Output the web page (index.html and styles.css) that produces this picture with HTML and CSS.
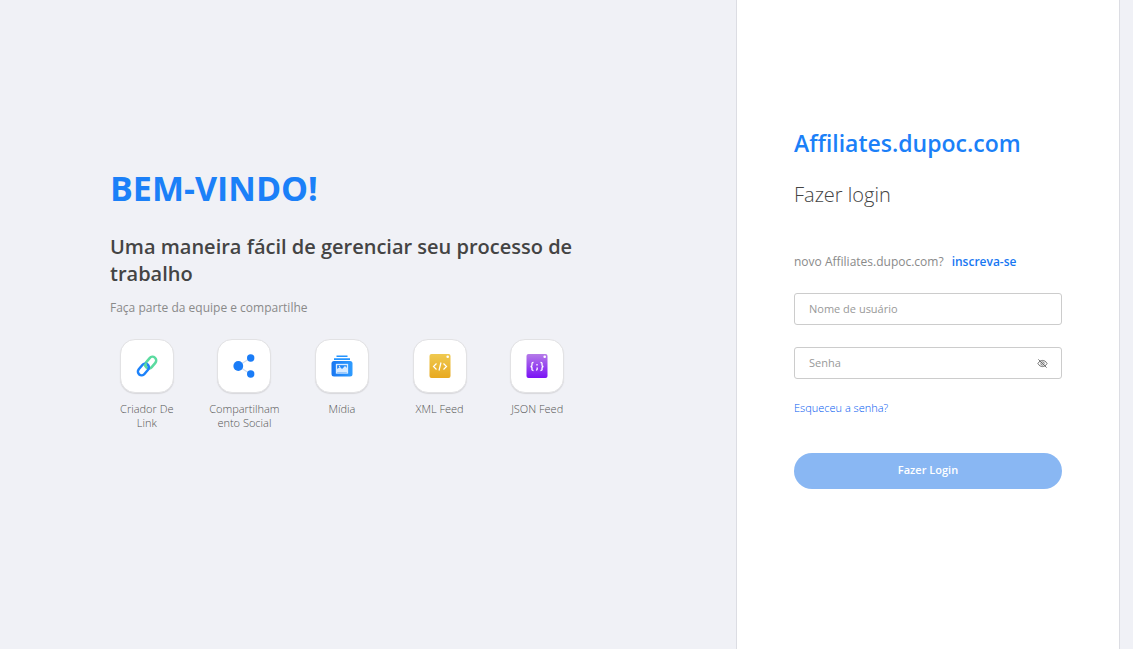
FILE: index.html
```html
<!DOCTYPE html>
<html lang="pt">
<head>
<meta charset="utf-8">
<meta name="viewport" content="width=device-width, initial-scale=1">
<title>Fazer login</title>
<link rel="stylesheet" href="styles.css">
</head>
<body>
<main class="page">
  <section class="welcome">
    <div class="intro">
      <h1 class="welcome-title">BEM-VINDO!</h1>
      <h2 class="welcome-subtitle">Uma maneira fácil de gerenciar seu processo de trabalho</h2>
      <p class="welcome-text">Faça parte da equipe e compartilhe</p>
      <ul class="features">
        <li class="feature">
          <span class="tile"><svg class="icon" viewBox="0 0 24 24" aria-hidden="true">
            <defs><linearGradient id="blue" x1="0" x2="1"><stop offset="0" stop-color="#1877f2"/><stop offset="1" stop-color="#2f9cff"/></linearGradient></defs>
            <g fill="none" stroke-width="2.500"><rect x="9.2" y="4.9" width="13" height="7.4" rx="3.7" transform="rotate(-50 15.7 8.6)" stroke="#5bdba0"/><rect x="1.9" y="11.8" width="13" height="7.4" rx="3.7" transform="rotate(-50 8.4 15.500)" stroke="#1d82fa"/><path d="M9.200 12.200l2.200-2.900" stroke="#5bdba0"/></g></svg></span>
          <span class="feature-name">Criador De Link</span>
        </li>
        <li class="feature">
          <span class="tile"><svg class="icon" viewBox="0 0 24 24" aria-hidden="true"><path d="M18.500 4L6 12l12.500 8" fill="none" stroke="#cfdcf0" stroke-width="1.200"/><g fill="#1a7cf7"><circle cx="6.300" cy="12" r="4.900"/><circle cx="18.700" cy="4" r="3.700"/><circle cx="18.700" cy="20" r="3.700"/></g></svg></span>
          <span class="feature-name">Compartilhamento Social</span>
        </li>
        <li class="feature">
          <span class="tile"><svg class="icon" viewBox="0 0 24 24" aria-hidden="true"><path d="M6.500 1.500h11v1.600h-11zM4 4.200h16v1.800H4z" fill="#2494ff"/><rect x="1.500" y="7" width="21" height="15.500" rx="2.500" fill="url(#blue)"/><rect x="6.500" y="10.500" width="11" height="8.500" fill="none" stroke="#d9ebff" stroke-width="1.300"/><path d="M7 18v-3l3-2 2 2 3-3 2 2v4z" fill="#d9ebff"/><circle cx="9.500" cy="12.500" r=".7" fill="#d9ebff"/></svg></span>
          <span class="feature-name">Mídia</span>
        </li>
        <li class="feature">
          <span class="tile"><svg class="icon" viewBox="0 0 24 24" aria-hidden="true"><defs><linearGradient id="gold" x2="0" y2="1"><stop stop-color="#efc950"/><stop offset="1" stop-color="#e8a920"/></linearGradient></defs><rect x="1.500" width="21" height="24" rx="2" fill="url(#gold)"/><circle cx="19.700" cy="2.700" r="1.300" fill="#fff"/><path d="M8.500 9.500L5.500 12.500l3 3M15.500 9.500l3 3-3 3M13 8.500l-2 8" fill="none" stroke="#fff" stroke-width="1.200"/></svg></span>
          <span class="feature-name">XML Feed</span>
        </li>
        <li class="feature">
          <span class="tile"><svg class="icon" viewBox="0 0 24 24" aria-hidden="true"><defs><linearGradient id="violet" x2="0" y2="1"><stop stop-color="#b57be8"/><stop offset="1" stop-color="#7a12f5"/></linearGradient></defs><rect x="1.500" width="21" height="24" rx="2" fill="url(#violet)"/><circle cx="19.700" cy="2.700" r="1.300" fill="#fff"/><path d="M8.500 8.500c-2 0-1.500 1-1.500 2.500S6.500 12.500 5.500 12.500c1 0 1.500 0 1.500 1.500s-.5 2.500 1.500 2.500M15.500 8.500c2 0 1.500 1 1.500 2.500s.5 1.500 1.500 1.500c-1 0-1.500 0-1.500 1.500s.5 2.500-1.500 2.500M12 10v1.500M12.200 13.500v1.500l-.8 1.500" fill="none" stroke="#fff" stroke-width="1.300"/></svg></span>
          <span class="feature-name">JSON Feed</span>
        </li>
      </ul>
    </div>
  </section>
  <section class="login">
    <form class="login-form">
      <p class="brand">Affiliates.dupoc.com</p>
      <h2 class="login-title">Fazer login</h2>
      <p class="signup"><span>novo Affiliates.dupoc.com?</span><a class="signup-link" href="#">inscreva-se</a></p>
      <input class="field" type="text" placeholder="Nome de usuário" aria-label="Nome de usuário">
      <div class="password">
        <input class="field" type="password" placeholder="Senha" aria-label="Senha">
        <button class="reveal" type="button" aria-label="Mostrar senha"><svg class="eye" viewBox="0 0 12 12" aria-hidden="true"><g fill="none" stroke="#666" stroke-width="1"><path d="M1 6c2.500-4.500 7.500-4.500 10 0-2.500 4.500-7.500 4.500-10 0z"/><circle cx="6" cy="6" r="1.800"/><path d="M1.500 1.500l9 9"/></g></svg></button>
      </div>
      <a class="forgot" href="#">Esqueceu a senha?</a>
      <button class="submit" type="submit">Fazer Login</button>
    </form>
  </section>
</main>
</body>
</html>
```
FILE: styles.css
```css
* { box-sizing: border-box; }
body {
  margin: 0;
  background: #f0f1f6;
  color: #555;
  font-family: "Open Sans", sans-serif;
  font-size: 12px;
  font-weight: 300;
}
h1, h2, p, ul { margin: 0; padding: 0; }
a { color: #1877f2; text-decoration: none; }
.page { display: flex; min-height: 100vh; padding-right: 13px; }
.welcome { flex: 1; padding: 164px 110px 40px; }
.intro { max-width: 464px; }
.welcome-title { color: #1b80f8; font-size: 34px; line-height: 48px; font-weight: 700; }
.welcome-subtitle { margin: 21px -8px 0 0; color: #444; font-size: 20px; line-height: 27px; font-weight: 600; }
.welcome-text { margin-top: 12px; color: #8a8a8a; font-size: 12px; line-height: 18px; font-weight: 400; }
.features {
  display: grid;
  grid-template-columns: repeat(5, 1fr);
  gap: 24px;
  margin-top: 22px;
  list-style: none;
}
.feature { display: flex; flex-direction: column; align-items: center; gap: 9px; min-width: 0; }
.tile {
  display: grid;
  place-items: center;
  width: 54px;
  height: 54px;
  border: 1px solid #e2e2e4;
  border-radius: 15px;
  background: #fff;
  box-shadow: 0 1px 1px #d8d8dc;
}
.icon { width: 24px; height: 24px; }
.feature-name { width: 100%; font-size: 11px; line-height: 14px; text-align: center; overflow-wrap: anywhere; }
.login {
  width: 384px;
  padding: 126px 57px 40px;
  background: #fff;
  border: solid #dcdde3;
  border-width: 0 1px;
}
.login-form { display: flex; flex-direction: column; }
.brand { color: #1b80f8; font-size: 23px; line-height: 34px; font-weight: 600; }
.login-title { margin-top: 21px; color: #444; font-size: 20px; line-height: 28px; font-weight: 300; }
.signup { display: flex; gap: 8px; margin: 44px 0 22px; color: #8a8a8a; line-height: 18px; font-weight: 400; }
.signup-link { font-weight: 600; }
.field {
  width: 100%;
  height: 32px;
  padding: 0 14px 2px;
  border: 1px solid #ccc;
  border-radius: 3px;
  background: #fff;
  color: #444;
  font: 400 11px "Open Sans", sans-serif;
}
.field::placeholder { color: #999; opacity: 1; }
.password { position: relative; margin-top: 22px; }
.reveal { position: absolute; top: 8px; right: 12px; display: grid; place-items: center; width: 16px; height: 16px; padding: 0; border: 0; background: none; }
.eye { width: 11px; height: 11px; }
.forgot { align-self: flex-start; margin-top: 21px; color: #0058f0; font-size: 11px; line-height: 16px; font-weight: 300; }
.submit {
  height: 36px;
  margin-top: 37px;
  padding: 0 0 3px;
  border: 0;
  border-radius: 18px;
  background: #89b7f3;
  color: #fff;
  font: 600 11px "Open Sans", sans-serif;
}
```
